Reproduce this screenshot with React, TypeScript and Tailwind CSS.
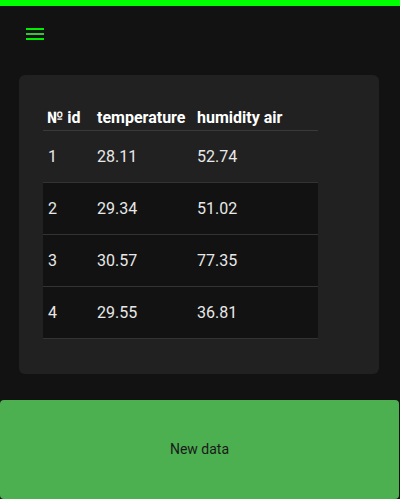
import React from "react";

const rows = [
  { id: 1, t: "28.11", h: "52.74" },
  { id: 2, t: "29.34", h: "51.02" },
  { id: 3, t: "30.57", h: "77.35" },
  { id: 4, t: "29.55", h: "36.81" },
];

export default function App() {
  return (
    <div
      className="w-[400px] h-[499px] bg-[#121212] flex flex-col overflow-hidden"
      style={{ fontFamily: "Roboto, 'Liberation Sans', sans-serif" }}
    >
      <div className="h-[6px] bg-[#00ff00] shrink-0" />
      <div className="h-[69px] shrink-0 pl-[26px] pt-[22px]">
        <svg width="18" height="12" viewBox="0 0 18 12" className="block">
          <rect x="0" y="0" width="18" height="2" fill="#00ee00" />
          <rect x="0" y="5" width="18" height="2" fill="#3fbf3f" />
          <rect x="0" y="10" width="18" height="2" fill="#00ee00" />
        </svg>
      </div>
      <div className="ml-[19px] w-[360px] h-[299px] bg-[#212121] rounded-[6px] pt-[25px] pl-[24px] shrink-0">
        <div className="w-[275px]">
          <div className="flex h-[31px] border-b border-[#3a3a3a] text-white font-bold text-[16px] items-start pt-[6px]">
            <div className="w-[50px] pl-[4px]">№ id</div>
            <div className="w-[100px] pl-[4px]">temperature</div>
            <div className="flex-1 pl-[4px]">humidity air</div>
          </div>
          {rows.map((r, i) => (
            <div
              key={r.id}
              className={`flex h-[52px] items-center border-b border-[#333333] text-[16px] text-[#e8e8e8] ${
                i === 0 ? "" : "bg-[#121212]"
              }`}
            >
              <div className="w-[50px] pl-[5px]">{r.id}</div>
              <div className="w-[100px] pl-[4px]">{r.t}</div>
              <div className="flex-1 pl-[4px]">{r.h}</div>
            </div>
          ))}
        </div>
      </div>
      <div className="h-[26px] shrink-0" />
      <button className="w-[399px] h-[99px] bg-[#4caf50] rounded-[4px] text-[14px] text-[#1a1a1a] flex items-center justify-center shrink-0">
        New data
      </button>
    </div>
  );
}
